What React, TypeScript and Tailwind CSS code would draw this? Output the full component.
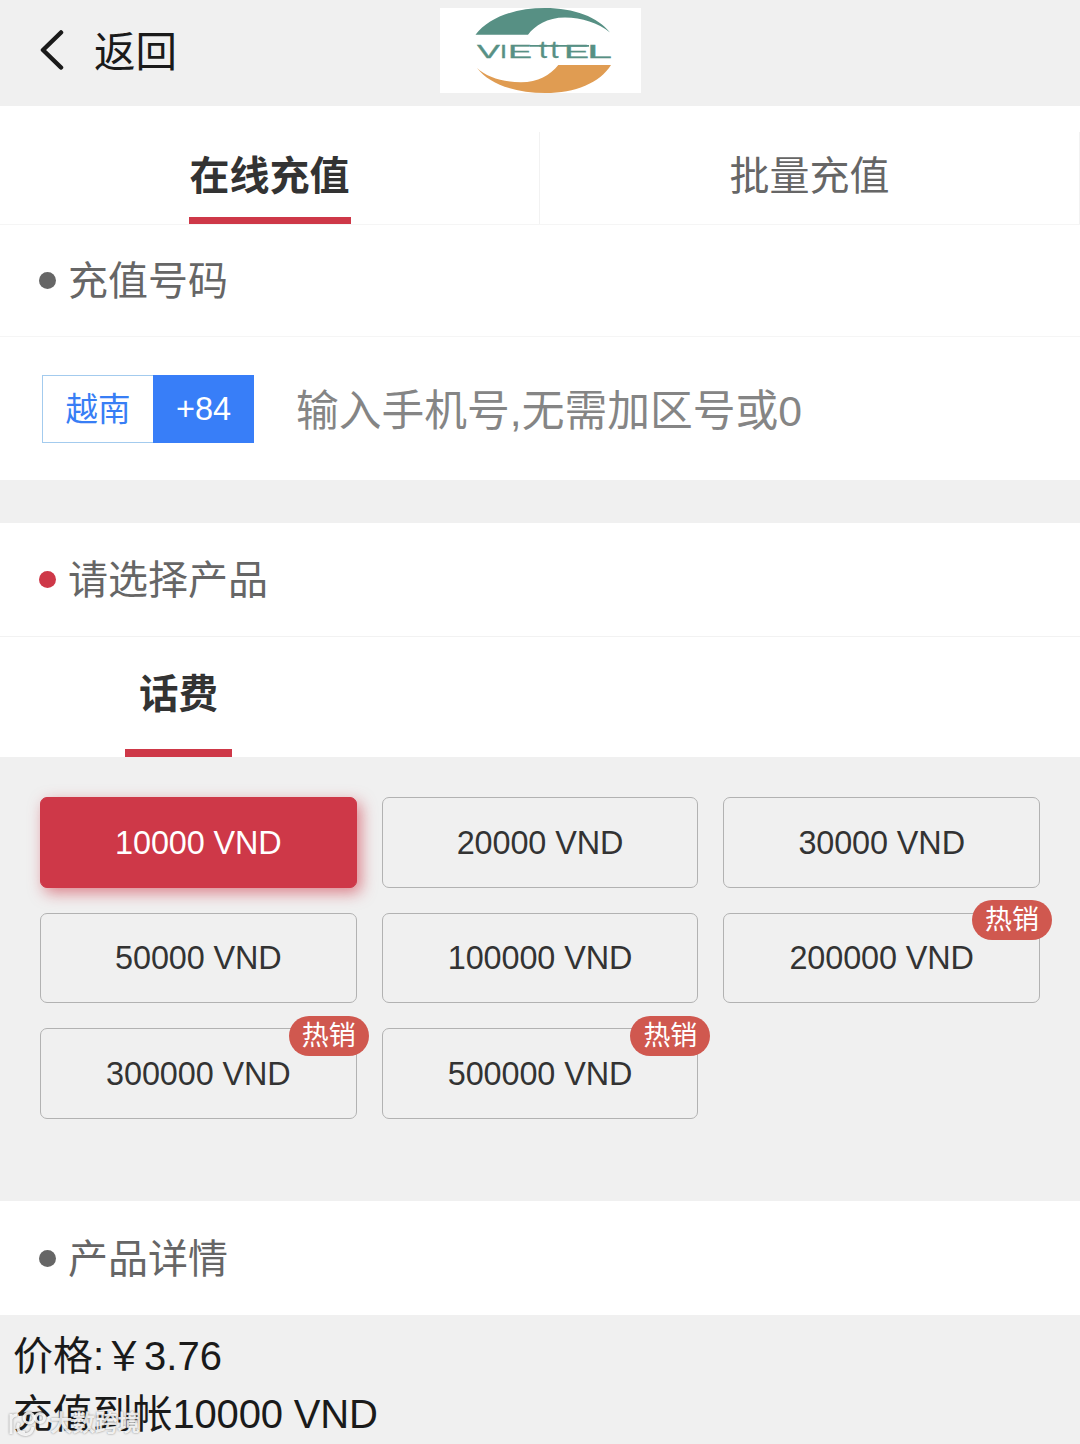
import { useState } from "react";
import clsx from "clsx";

const products = [
    { name: "10000 VND", hot: false },
    { name: "20000 VND", hot: false },
    { name: "30000 VND", hot: false },
    { name: "50000 VND", hot: false },
    { name: "100000 VND", hot: false },
    { name: "200000 VND", hot: true },
    { name: "300000 VND", hot: true },
    { name: "500000 VND", hot: true },
];

const tabs = ["在线充值", "批量充值"];

// each part of the wordmark is stretched to its own width
const logoLetters = [
    { text: "V", x: 37, width: 23, size: 18 },
    { text: "I", x: 60, width: 7, size: 18 },
    { text: "E", x: 68, width: 24, size: 18 },
    { text: "t", x: 99, width: 8, size: 24 },
    { text: "t", x: 110.5, width: 8, size: 24 },
    { text: "E", x: 124, width: 25, size: 18 },
    { text: "L", x: 147, width: 25, size: 18 },
];

const ViettelLogo = () => (
    <svg width="201" height="85" viewBox="0 0 201 85" className="block bg-white">
        <path d="M35.5 26.8C49 9 76 0 105 0c29 0 53 9 65 24.5C158 15 142 9.6 125 9.6c-18 0-30 8-37 17.2z" fill="#579084" />
        <path d="M37 60c9 9 27 14.3 44 14.3 17 0 29-7 37.3-17.3H171c-11 18-36 28-65.5 28C75 85 49 76 37 60z" fill="#e09c52" />
        {logoLetters.map((item, i) => (
            <text
                key={i}
                x={item.x}
                y="49.8"
                fontSize={item.size}
                textLength={item.width}
                lengthAdjust="spacingAndGlyphs"
                fill="#579084"
                stroke="#579084"
                strokeWidth="0.3"
                className="font-['Liberation_Sans']"
            >
                {item.text}
            </text>
        ))}
        <path d="M90 37.8H149" stroke="#579084" strokeWidth="1.8" />
    </svg>
);

const SectionTitle = ({ title, active }: { title: string; active?: boolean }) => (
    <div className="flex items-center h-full pl-[39px] gap-[12px] text-[40px] leading-none text-[#666]">
        <span className={clsx("w-[17px] h-[17px] rounded-full", active ? "bg-[#ce3848]" : "bg-[#666]")} />
        <span className="pt-[1px]">{title}</span>
    </div>
);

const App = () => {
    const [tab, setTab] = useState(0);
    const [selected, setSelected] = useState(0);

    return (
        <div className="w-[1080px] h-[1444px] overflow-hidden bg-[#f0f0f0] text-[#1a1a1a] font-['Liberation_Sans','Noto_Sans_CJK_SC',sans-serif]">
            {/* ============ HEADER ============ */}
            <header className="relative h-[106px] flex items-start justify-center pt-2">
                <button className="absolute left-[40px] top-[27px] flex items-center gap-[30px]">
                    <svg width="24" height="42" viewBox="0 0 24 42" fill="none" stroke="#1a1a1a" strokeWidth="4.5" strokeLinecap="round" strokeLinejoin="round">
                        <path d="M21 3.5L3 21l18 17.5" />
                    </svg>
                    <span className="pt-[5px] -mb-[1px] text-[41.5px] leading-[42px]">返回</span>
                </button>
                <ViettelLogo />
            </header>

            {/* ============ TABS ============ */}
            <div className="h-[118px] pt-[26px] bg-white grid grid-cols-2">
                {tabs.map((item, i) => (
                    <button
                        key={item}
                        onClick={() => setTab(i)}
                        className="h-[92px] flex justify-center border-r border-[#f2f2f2]"
                    >
                        <span
                            className={clsx(
                                "h-full px-[1px] pt-[24px] text-[40px] leading-[40px] border-b-[7px]",
                                tab === i ? "font-bold text-[#333] border-[#ce3848]" : "text-[#666] border-transparent"
                            )}
                        >
                            {item}
                        </span>
                    </button>
                ))}
            </div>

            {/* ============ PHONE NUMBER ============ */}
            <section className="bg-white h-[256px] border-t border-[#f5f5f5]">
                <div className="h-[112px] border-b border-[#f5f5f5]">
                    <SectionTitle title="充值号码" />
                </div>
                <div className="h-[143px] flex items-center pl-[42px]">
                    <div className="flex h-[68px] w-[212px] text-[32.5px] leading-none">
                        <div className="w-[111px] pt-[3px] flex items-center justify-center border border-r-0 border-[#a3cbee] text-[#387ef5]">越南</div>
                        <div className="flex-1 pt-[2px] flex items-center justify-center bg-[#387ef8] text-white">+84</div>
                    </div>
                    <div className="ml-[42px] pt-[6px] text-[42.75px] leading-none text-[#858585]">输入手机号,无需加区号或0</div>
                </div>
            </section>

            {/* ============ PRODUCTS ============ */}
            <section className="mt-[43px] bg-white">
                <div className="h-[114px] border-b border-[#f2f2f2]">
                    <SectionTitle title="请选择产品" active />
                </div>
                <div className="h-[120px] pl-[125px] flex">
                    <div className="w-[107px] h-full pt-[37px] text-center text-[39.5px] leading-[40px] font-bold text-[#333] border-b-[8px] border-[#ce3848]">
                        话费
                    </div>
                </div>
            </section>

            <div className="h-[444px] p-[40px] grid grid-cols-3 gap-[25px] content-start">
                {products.map((item, i) => (
                    <button
                        key={item.name}
                        onClick={() => setSelected(i)}
                        className={clsx(
                            "relative h-[90.6px] pt-[1px] rounded-[7px] border text-[32.4px] tracking-[-0.1px] leading-none",
                            selected === i
                                ? "bg-[#ce3848] border-[#ce3848] text-white shadow-[4px_5px_15px_rgba(206,56,72,0.6)]"
                                : "border-[#b2b2b2] text-[#333]"
                        )}
                    >
                        {item.name}
                        {item.hot && (
                            <span className="absolute -top-[13.5px] -right-[13px] w-[80px] h-[40px] rounded-full bg-[#d0584f] text-white text-[27px] leading-[40px]">
                                热销
                            </span>
                        )}
                    </button>
                ))}
            </div>

            {/* ============ DETAIL ============ */}
            <section className="h-[114px] bg-white">
                <SectionTitle title="产品详情" />
            </section>
            <footer className="relative pt-[13px] pl-[13px] text-[40px] leading-[57.5px]">
                <div>价格:￥3.76</div>
                <div className="tracking-[-0.15px]">充值到帐10000 VND</div>

                {/* Watermark */}
                <div className="absolute left-[9px] top-[95px] flex items-center gap-[3px] text-white/85">
                    <svg width="38" height="28" viewBox="0 0 38 28" fill="none" stroke="currentColor" strokeWidth="3" className="drop-shadow-[0_0_1px_rgba(0,0,0,0.5)]">
                        <path d="M2 4v20M2 9q2-4 6-4M9 21c6 6 14 4 15-4M10 13c-3 5 0 11 6 9" />
                        <circle cx="20" cy="8" r="5" />
                        <circle cx="31" cy="8" r="4.5" />
                    </svg>
                    <span className="text-[22.5px] leading-[28px] font-bold [text-shadow:0_0_2px_rgba(0,0,0,0.5)]">大数跨境</span>
                </div>
            </footer>
        </div>
    );
};

export default App;
